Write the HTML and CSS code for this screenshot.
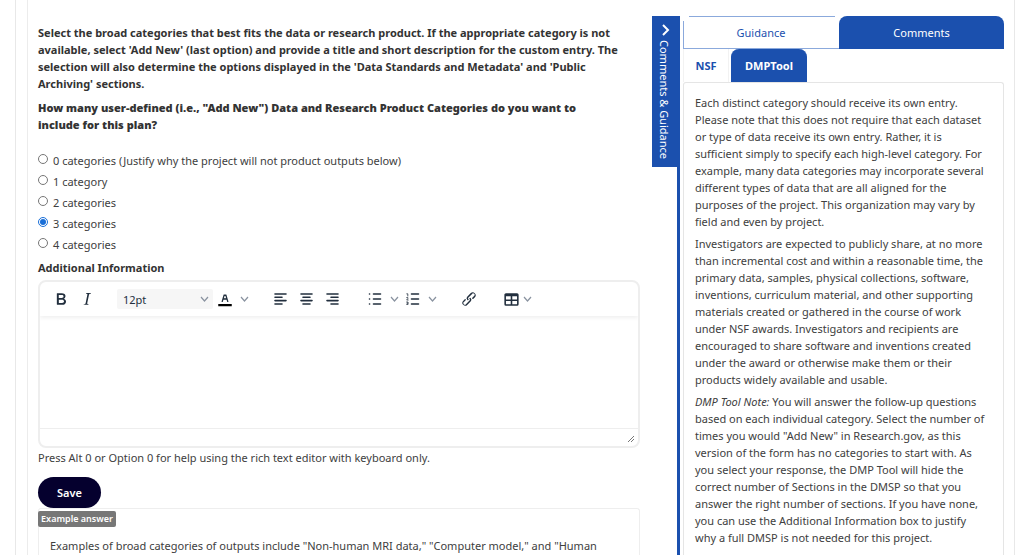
FILE: index.html
```
<!DOCTYPE html>
<html lang="en">
<head>
<meta charset="utf-8">
<title>Data and Research Product Categories</title>
<link rel="stylesheet" href="styles.css">
</head>
<body>
<div class="page">
<div class="panel">
<main class="question">
  <div class="prompt">
    <p>Select the broad categories that best fits the data or research product. If the appropriate category is not available, select 'Add New' (last option) and provide a title and short description for the custom entry. The selection will also determine the options displayed in the 'Data Standards and Metadata' and 'Public Archiving' sections.</p>
    <p class="strong">How many user-defined (i.e., "Add New") Data and Research Product Categories do you want to include for this plan?</p>
  </div>
  <form class="answer">
    <div class="options">
      <label class="option"><input type="radio" name="count"><span>0 categories (Justify why the project will not product outputs below)</span></label>
      <label class="option"><input type="radio" name="count"><span>1 category</span></label>
      <label class="option"><input type="radio" name="count"><span>2 categories</span></label>
      <label class="option"><input type="radio" name="count" checked><span>3 categories</span></label>
      <label class="option"><input type="radio" name="count"><span>4 categories</span></label>
    </div>
    <label class="info-label" for="info">Additional Information</label>
    <div class="editor">
      <div class="toolbar">
        <div class="group">
          <button type="button" class="tool" aria-label="Bold"><svg width="20" height="20" viewBox="0 0 24 24"><path fill-rule="evenodd" d="M7.8 19c-.3 0-.5 0-.6-.2l-.2-.5V5.700c0-.2 0-.4.2-.5l.6-.2h5c1.500 0 2.700.3 3.500 1 .7.6 1.100 1.400 1.100 2.500a3 3 0 0 1-.6 1.900c-.4.6-1 1-1.600 1.200.4.100.9.300 1.300.6s.8.700 1 1.200c.4.400.5 1 .5 1.600 0 1.300-.4 2.300-1.300 3-.8.7-2.100 1-3.800 1H7.800zm5-8.300c.6 0 1.200-.1 1.600-.5.4-.3.6-.7.6-1.300 0-1.100-.8-1.700-2.300-1.700H9.300v3.500h3.400zm.5 6c.7 0 1.300-.1 1.700-.4.4-.4.6-.9.6-1.500s-.2-1-.7-1.400c-.4-.3-1-.4-2-.4H9.400v3.800h4z"/></svg></button>
          <button type="button" class="tool" aria-label="Italic"><svg width="20" height="20" viewBox="0 0 24 24"><path d="m16.700 4.700-.1.900h-.3c-.6 0-1 0-1.400.3-.3.3-.4.6-.5 1.100l-2.100 9.800v.6c0 .5.4.8 1.400.8h.2l-.2.800H8l.2-.8h.2c1.100 0 1.800-.5 2-1.500l2-9.800.1-.5c0-.6-.4-.8-1.400-.8h-.3l.2-.9h5.800z"/></svg></button>
        </div>
        <div class="group">
          <button type="button" class="size"><span>12pt</span><svg class="chev" width="9" height="6" viewBox="0 0 9 6"><path d="M1 1l3.500 4L8 1"/></svg></button>
          <button type="button" class="tool split" aria-label="Text color"><svg width="18" height="18" viewBox="0 0 24 24"><path fill="#000" d="M3 18.500h18v3H3z"/><path fill-rule="evenodd" d="M8.700 16h-.8a.5.5 0 0 1-.5-.6l2.700-9c.1-.3.3-.4.5-.4h2.800c.2 0 .4.1.5.4l2.700 9a.5.5 0 0 1-.5.600h-.8a.5.5 0 0 1-.4-.4l-.7-2.200c0-.3-.3-.4-.5-.4h-3.400c-.2 0-.4.100-.5.400l-.7 2.200c0 .3-.2.400-.4.400zm2.600-7.600-.6 2a.5.5 0 0 0 .5.600h1.600a.5.5 0 0 0 .5-.6l-.6-2c0-.3-.3-.4-.5-.4h-.4c-.2 0-.4.100-.5.400z"/></svg></button>
          <button type="button" class="arrow" aria-label="Text color menu"><svg class="chev" width="9" height="6" viewBox="0 0 9 6"><path d="M1 1l3.500 4L8 1"/></svg></button>
        </div>
        <div class="group">
          <button type="button" class="tool" aria-label="Align left"><svg class="lines" width="14" height="12" viewBox="0 0 14 12"><path d="M1 1h11M1 4.300h7M1 7.600h11M1 11h7"/></svg></button>
          <button type="button" class="tool" aria-label="Align center"><svg class="lines" width="14" height="12" viewBox="0 0 14 12"><path d="M1 1h11M3 4.300h7M1 7.600h11M3 11h7"/></svg></button>
          <button type="button" class="tool" aria-label="Align right"><svg class="lines" width="14" height="12" viewBox="0 0 14 12"><path d="M1 1h11M5 4.300h7M1 7.600h11M5 11h7"/></svg></button>
        </div>
        <div class="group">
          <button type="button" class="tool split" aria-label="Bullet list"><svg class="lines" width="14" height="12" viewBox="0 0 14 12"><path d="M5.500 1h7M5.500 6h7M5.500 11h7M1.500 1h.1M1.500 6h.1M1.500 11h.1"/></svg></button>
          <button type="button" class="arrow" aria-label="Bullet list menu"><svg class="chev" width="9" height="6" viewBox="0 0 9 6"><path d="M1 1l3.500 4L8 1"/></svg></button>
          <button type="button" class="tool split" aria-label="Numbered list"><svg class="lines" width="14" height="12" viewBox="0 0 14 12"><path d="M5.500 1h7M5.500 6h7M5.500 11h7"/><path stroke-width=".8" d="M.8.800h1V3M.7 4.600h1.200v.8L.7 7h1.500M.7 9h1.300v1.200H1M2 10.200v1.400H.7"/></svg></button>
          <button type="button" class="arrow" aria-label="Numbered list menu"><svg class="chev" width="9" height="6" viewBox="0 0 9 6"><path d="M1 1l3.500 4L8 1"/></svg></button>
        </div>
        <div class="group">
          <button type="button" class="tool" aria-label="Link"><svg width="18" height="18" viewBox="0 0 24 24"><path d="M6.200 12.300a1 1 0 0 1 1.400 1.400l-2 2a2 2 0 1 0 2.600 2.800l4.800-4.800a1 1 0 0 0 0-1.400 1 1 0 1 1 1.400-1.300 2.900 2.900 0 0 1 0 4L9.600 20a3.900 3.900 0 0 1-5.500-5.500l2-2zm11.600-.6a1 1 0 0 1-1.400-1.400l2-2a2 2 0 1 0-2.600-2.800L11 10.300a1 1 0 0 0 0 1.400A1 1 0 1 1 9.600 13a2.900 2.900 0 0 1 0-4L14.400 4a3.900 3.900 0 0 1 5.500 5.500l-2 2z"/></svg></button>
        </div>
        <div class="group">
          <button type="button" class="tool split" aria-label="Table"><svg width="19" height="19" viewBox="0 0 24 24"><path fill-rule="evenodd" d="M19 4a2 2 0 0 1 2 2v12a2 2 0 0 1-2 2H5a2 2 0 0 1-2-2V6c0-1.100.9-2 2-2h14zM5 14v4h6v-4H5zm14 0h-6v4h6v-4zm0-6h-6v4h6V8zM5 12h6V8H5v4z"/></svg></button>
          <button type="button" class="arrow narrow" aria-label="Table menu"><svg class="chev" width="9" height="6" viewBox="0 0 9 6"><path d="M1 1l3.500 4L8 1"/></svg></button>
        </div>
      </div>
      <textarea id="info" class="text"></textarea>
      <div class="status"><svg width="8" height="8" viewBox="0 0 8 8"><path d="M1 7l6-6M4 7l3-3"/></svg></div>
    </div>
    <p class="help">Press Alt 0 or Option 0 for help using the rich text editor with keyboard only.</p>
    <button type="submit" class="save">Save</button>
  </form>
  <section class="example">
    <span class="badge">Example answer</span>
    <p>Examples of broad categories of outputs include "Non-human MRI data," "Computer model," and "Human</p>
  </section>
</main>
<button type="button" class="toggle"><svg width="12" height="12" viewBox="0 0 12 12"><path d="M4 1l5 5-5 5"/></svg><span>Comments &amp; Guidance</span></button>
<aside class="side">
  <nav class="tabs"><a href="#guidance" class="tab outline">Guidance</a><a href="#comments" class="tab filled">Comments</a></nav>
  <nav class="subtabs"><a href="#nsf" class="subtab">NSF</a><a href="#dmptool" class="subtab filled">DMPTool</a></nav>
  <div class="guidance">
    <p>Each distinct category should receive its own entry. Please note that this does not require that each dataset or type of data receive its own entry. Rather, it is sufficient simply to specify each high-level category. For example, many data categories may incorporate several different types of data that are all aligned for the purposes of the project. This organization may vary by field and even by project.</p>
    <p>Investigators are expected to publicly share, at no more than incremental cost and within a reasonable time, the primary data, samples, physical collections, software, inventions, curriculum material, and other supporting materials created or gathered in the course of work under NSF awards. Investigators and recipients are encouraged to share software and inventions created under the award or otherwise make them or their products widely available and usable.</p>
    <p><em>DMP Tool Note:</em> You will answer the follow-up questions based on each individual category. Select the number of times you would "Add New" in Research.gov, as this version of the form has no categories to start with. As you select your response, the DMP Tool will hide the correct number of Sections in the DMSP so that you answer the right number of sections. If you have none, you can use the Additional Information box to justify why a full DMSP is not needed for this project.</p>
  </div>
</aside>
</div>
</div>
</body>
</html>
```
FILE: styles.css
```
* { box-sizing: border-box; }
html, body { height: 100%; }
body { margin: 0; overflow: hidden; background: #fff; color: #404040; font: 11px/17px "Noto Sans", sans-serif; }
p { margin: 0; }
button { font: inherit; padding: 0; border: 0; background: none; color: inherit; }
svg { display: block; }
.page { height: 100%; margin: 0 9px 0 15px; border: solid #e8e8e8; border-width: 0 1px; padding-left: 11px; }
.panel { display: flex; align-items: stretch; height: 100%; border-left: 1px solid #ececec; padding: 16px 10px 0 10px; }
.question { flex: 1; min-width: 0; padding: 8px 12px 0 0; display: flex; flex-direction: column; }
.prompt { display: flex; flex-direction: column; gap: 7px; font-weight: 700; color: #333; }
.strong { font-weight: 900; padding-right: 24px; }
.options { display: flex; flex-direction: column; gap: 4px; padding: 19px 0 6px; }
.option { display: flex; align-items: flex-start; gap: 5px; }
.option input { width: 10px; height: 10px; margin: 2px 0 0; accent-color: #1a6fd8; }
.info-label { display: block; color: #333; font-weight: 700; margin-bottom: 4px; }
.editor { border: 2px solid #eee; border-radius: 8px; overflow: hidden; }
.toolbar { display: flex; align-items: center; gap: 17px; height: 34px; padding: 0 7px 0 8px; box-shadow: 0 2px 4px #00000010; }
.group { display: flex; align-items: center; }
.tool { display: grid; place-items: center; width: 26px; height: 24px; fill: #222f3e; }
.split { width: 24px; }
.arrow { display: grid; place-items: center; width: 14px; height: 24px; }
.narrow { width: 8px; }
.chev { fill: none; stroke: #8a93a0; stroke-width: 1.2; }
.lines { fill: none; stroke: #222f3e; stroke-width: 1.6; stroke-linecap: round; }
.size { display: flex; align-items: center; justify-content: space-between; width: 96px; height: 20px; padding: 0 4px 0 6px; border-radius: 2px; background: #f6f6f6; color: #222f3e; }
.text { display: block; width: 100%; height: 112px; border: 0; padding: 8px; resize: none; outline: 0; font: inherit; background: transparent; }
.status { display: flex; align-items: flex-end; justify-content: flex-end; height: 18px; padding: 3px; border-top: 1px solid #eee; }
.status path { stroke: #777; fill: none; }
.help { padding: 1px 0 11px; }
.save { display: block; width: 63px; height: 31px; border-radius: 16px; background: #05002e; color: #fff; font-weight: 600; }
.example { flex: 1; min-height: 0; border: 1px solid #eee; border-bottom: 0; border-radius: 3px 3px 0 0; }
.badge { display: block; width: 78px; margin: 2px 0 0 -1px; border-radius: 2px; background: #777; color: #fff; font-size: 9px; font-weight: 600; text-align: center; line-height: 16px; }
.example p { padding: 10px 11px 0; }
.toggle { display: flex; align-items: center; align-self: flex-start; gap: 4px; writing-mode: vertical-rl; width: 28px; height: 151px; padding: 8px 3px 0 0; background: #1b50ae; color: #fff; }
.toggle svg { fill: none; stroke: #fff; stroke-width: 2; }
.side { width: 327px; border-left: 3px solid #1b50ae; margin-left: -3px; padding-left: 3px; display: flex; flex-direction: column; }
.tabs { display: flex; height: 33px; }
.tab, .subtab { display: grid; place-items: center; color: #1b50ae; text-decoration: none; }
.tab { flex: 1; }
.tab + .tab { flex: 0 0 165px; }
.outline { background: linear-gradient(#8ba9dc, #8ba9dc) 6px 0 / calc(100% - 10px) 1px no-repeat, linear-gradient(#8ba9dc, #8ba9dc) 0 5px / 1px 100% no-repeat, linear-gradient(#8ba9dc, #8ba9dc) 0 100% / 100% 1px no-repeat; }
.tab.filled, .subtab.filled { background: #1b50ae; color: #fff; border-radius: 8px 8px 0 0; }
.subtabs { display: flex; gap: 2px; height: 33px; font-weight: 700; }
.subtab { width: 46px; border: 1px solid #f2f2f2; border-width: 0 1px; }
.subtab.filled { width: 76px; border-color: #1b50ae; }
.guidance { flex: 1; border: 1px solid #e5e5e5; border-bottom: 0; border-radius: 3px 3px 0 0; padding: 11px 14px 0 11px; display: flex; flex-direction: column; gap: 5px; }
```
